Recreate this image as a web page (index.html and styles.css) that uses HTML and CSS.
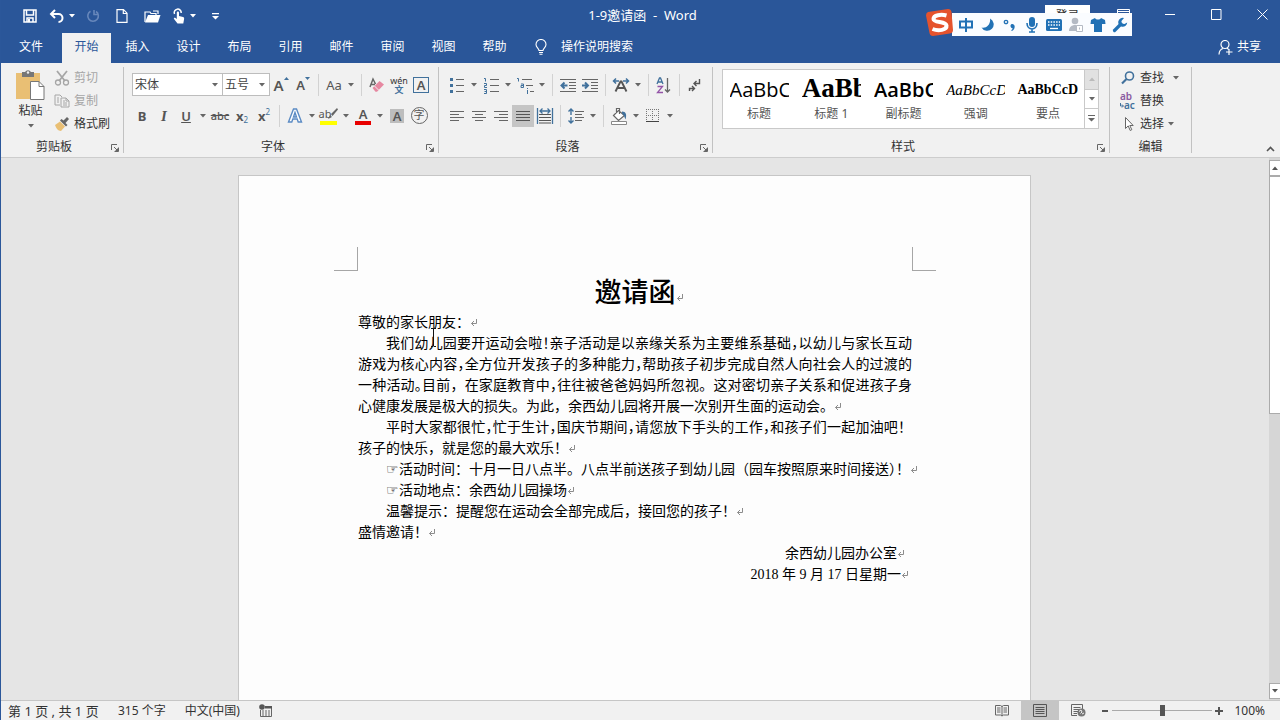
FILE: index.html
```html
<!DOCTYPE html>
<html lang="zh-CN">
<head>
<meta charset="utf-8">
<title>1-9邀请函 - Word</title>
<link rel="stylesheet" href="styles.css">
</head>
<body>
<svg class="sprite" aria-hidden="true">
  <symbol id="caret" viewBox="0 0 6 4"><path d="M0 0h6L3 3.5z" fill="currentColor"/></symbol>
  <symbol id="launch" viewBox="0 0 8 8"><path d="M.5 6V.5H6M3 3l3.500 3.500M7.500 3.500v4h-4" fill="none" stroke="currentColor"/><path d="M7 4v3H4z" fill="currentColor"/></symbol>
  <symbol id="ret" viewBox="0 0 8 8"><path d="M6.500 0v4.500H1.500M4 2 1.500 4.500 4 7" fill="none" stroke="currentColor"/></symbol>
</svg>
<div class="window">
  <header class="titlebar">
    <div class="quick">
      <button class="q" aria-label="保存"><svg width="14" height="14" viewBox="0 0 14 14"><path d="M1 1h12v12H1zM3.500 1v5h7V1M4 13V9h6v4" fill="none" stroke="currentColor" stroke-width="1.500"/><path d="M5 10h2v3H5z" fill="currentColor"/></svg></button>
      <button class="q q-split" aria-label="撤消"><svg width="16" height="14" viewBox="0 0 16 14"><path d="M2 5h7.500a4 4 0 0 1 0 8M6 1 2 5l4 4" fill="none" stroke="currentColor" stroke-width="2"/></svg><svg class="caret"><use href="#caret"/></svg></button>
      <button class="q dim" aria-label="恢复"><svg width="14" height="14" viewBox="0 0 14 14"><path d="M10 2.500A5.300 5.300 0 1 1 4.500 2.300M8 1v4.500h4.500" fill="none" stroke="currentColor" stroke-width="1.600"/></svg></button>
      <button class="q" aria-label="新建"><svg width="12" height="14" viewBox="0 0 12 14"><path d="M1 .7h6.500L11 4.200v9.100H1zM7.300 1v3.500H11" fill="none" stroke="currentColor" stroke-width="1.200"/></svg></button>
      <button class="q" aria-label="打开"><svg width="17" height="14" viewBox="0 0 17 14"><path d="M1 13V3h5l1 1.500h5V6M9 2h5v3" fill="none" stroke="currentColor" stroke-width="1.200"/><path d="M4 6h12.500L14 13.500H1z" fill="currentColor"/></svg></button>
      <button class="q q-split" aria-label="触摸/鼠标模式"><svg width="14" height="16" viewBox="0 0 14 16"><path d="M2.500 6A3.500 3.500 0 1 1 9.200 5" fill="none" stroke="currentColor" stroke-width="1.500"/><path d="M4.800 4.500c0-1.500 2.200-1.500 2.200 0V8l4 1c1 .3 1.300 1 1.100 2l-.8 4.500H5.500L2 11c-.6-1.200.8-1.700 1.500-1l1.300 1z" fill="currentColor"/></svg><svg class="caret"><use href="#caret"/></svg></button>
      <button class="q" aria-label="自定义快速访问工具栏"><svg width="7" height="7" viewBox="0 0 7 7"><path d="M0 0h7v1.200H0zM0 3h7L3.500 6.500z" fill="currentColor"/></svg></button>
    </div>
    <h1 class="caption">1-9邀请函&nbsp; -&nbsp; Word</h1>
    <div class="controls">
      <button class="login">登录</button>
      <button class="c c-opt" aria-label="功能区显示选项"><svg width="13" height="11" viewBox="0 0 13 11"><path d="M.5.500h12v10H.5zM1 2.500h11" fill="none" stroke="currentColor"/></svg></button>
      <button class="c" aria-label="最小化"><svg width="11" height="11" viewBox="0 0 11 11"><path d="M0 5.500h10" stroke="currentColor"/></svg></button>
      <button class="c" aria-label="最大化"><svg width="11" height="11" viewBox="0 0 11 11"><path d="M.5.500h9.500v10H.5z" fill="none" stroke="currentColor"/></svg></button>
      <button class="c c-close" aria-label="关闭"><svg width="11" height="11" viewBox="0 0 11 11"><path d="m.5.500 10 10m0-10-10 10" stroke="currentColor"/></svg></button>
    </div>
  </header>

  <nav class="tabs">
    <button class="tab file">文件</button>
    <button class="tab active">开始</button>
    <button class="tab">插入</button>
    <button class="tab">设计</button>
    <button class="tab">布局</button>
    <button class="tab">引用</button>
    <button class="tab">邮件</button>
    <button class="tab">审阅</button>
    <button class="tab">视图</button>
    <button class="tab">帮助</button>
    <button class="tell"><svg width="12" height="16" viewBox="0 0 12 16"><path d="M4 11.500C4 9.500 1 8.500 1 5.500a5 5 0 0 1 10 0c0 3-3 4-3 6zM4 13.500h4M4.500 15.300h3" fill="none" stroke="currentColor" stroke-width="1.100"/></svg>操作说明搜索</button>
    <button class="share"><svg width="15" height="15" viewBox="0 0 15 15"><circle cx="7" cy="4.500" r="4" fill="none" stroke="currentColor" stroke-width="1.200"/><path d="M1 14.500c.2-4 2-5.500 4-6M9 8.300l1.500 1M11 9v6M8 12h6.500" fill="none" stroke="currentColor" stroke-width="1.200"/></svg>共享</button>
  </nav>

  <div class="ime">
    <svg class="ime-logo" width="29" height="29" viewBox="0 0 29 29"><path d="M3 4 23 1q3 0 3.500 3L28 22q0 3-3 3.500L8 28q-3 0-3.500-3L1 7.500Q1 4.500 3 4z" fill="#e5532d"/><path d="M21.500 7.500C16 6 8.500 7 8.500 11s12.500 2 13 6.500-8 6-14 3.500" fill="none" stroke="#fff" stroke-width="4"/></svg>
    <div class="ime-bar">
      <svg width="16" height="16" viewBox="0 0 16 16"><path d="M2 4.500h12v6H2zM8 1v14" fill="none" stroke="currentColor" stroke-width="2"/></svg>
      <svg width="16" height="16" viewBox="0 0 16 16"><path d="M10 1.500a6.500 6.500 0 1 1-8.500 9C6 12 11 7.500 10 1.500z" fill="currentColor"/></svg>
      <svg width="16" height="16" viewBox="0 0 16 16"><circle cx="4" cy="5" r="1.700" fill="none" stroke="currentColor" stroke-width="1.300"/><path d="M8.500 8.800c0-2.400 4.200-2.400 4.200 1 0 2.200-1.500 3.700-3 4.200l-.5-1c1-.5 1.400-1.100 1.400-1.800-1.100.2-2.100-1-2.100-2.400z" fill="currentColor"/></svg>
      <svg width="16" height="16" viewBox="0 0 16 16"><rect x="5" y="0" width="6" height="10" rx="3" fill="currentColor"/><path d="M3 6c0 8 10 8 10 0M8 12v3M5 15h6" fill="none" stroke="currentColor" stroke-width="1.600"/></svg>
      <svg width="16" height="16" viewBox="0 0 16 16"><rect x="0" y="2" width="16" height="12" rx="1.500" fill="currentColor"/><path d="M2 5h12M2 8h12" stroke="#fff" stroke-width="1.500" stroke-dasharray="1.500 1.200"/><path d="M4 11.500h8" stroke="#fff" stroke-width="1.300"/></svg>
      <svg class="muted" width="16" height="16" viewBox="0 0 16 16"><circle cx="7" cy="4" r="3.300" fill="currentColor"/><path d="M1 14c0-8 12-8 12 0z" fill="currentColor"/><path d="M8.500 8.500h6v6h-6z" fill="#fff" stroke="currentColor"/><path d="M11 10.500h1v2h-1z" fill="currentColor"/></svg>
      <svg width="16" height="16" viewBox="0 0 16 16"><path d="M1 3l4-2c1 2 5 2 6 0l4 2 .5 4H12v8H4V7H.5z" fill="currentColor"/></svg>
      <svg width="16" height="16" viewBox="0 0 16 16"><path d="M2.500 13.500 9 7" stroke="currentColor" stroke-width="3.200" stroke-linecap="round"/><path d="M12 1a4.500 4.500 0 1 0 3.200 4.500L12.500 7l-3-.5V4z" fill="currentColor"/></svg>
    </div>
  </div>

  <section class="ribbon">
    <div class="group clipboard">
      <div class="body clip-body">
        <button class="paste"><svg width="29" height="32" viewBox="0 0 29 32"><path d="M0 4h24v26H0z" fill="#e9bf74"/><path d="M6 3h3a3.500 3.500 0 0 1 6 0h3v5H6z" fill="#777"/><circle cx="12" cy="3.500" r="1.200" fill="#f1f1f1"/><path d="M14.500 12.500h8.500l5 5v13H14.500z" fill="#fff" stroke="#777"/><path d="M23 12.500v5h5" fill="none" stroke="#777"/></svg><span>粘贴</span><svg class="caret"><use href="#caret"/></svg></button>
        <div class="stack">
          <button class="cmd off"><svg width="16" height="16" viewBox="0 0 16 16"><path d="M3 1l8 10M13 1 5 11" fill="none" stroke="currentColor" stroke-width="1.800"/><circle cx="4" cy="12.500" r="2.500" fill="none" stroke="currentColor" stroke-width="1.300"/><circle cx="12" cy="12.500" r="2.500" fill="none" stroke="currentColor" stroke-width="1.300"/></svg>剪切</button>
          <button class="cmd off"><svg width="16" height="16" viewBox="0 0 16 16"><path d="M6 12H1V2h5l2 2M7 5h5l3 3v6H7zM12 5v3h3M3 5h2M3 7h2M3 9h2M9 8h2M9 10h4M9 12h4" fill="none" stroke="currentColor"/></svg>复制</button>
          <button class="cmd"><svg width="16" height="16" viewBox="0 0 16 16"><path d="m1 9 5-3.500 5 5L7 15c-3 0-5-3-6-6z" fill="#e9bf74"/><path d="m6 4.500 6 6 1.500-1.500-2-2 3.500-4L13 1 9.500 4.500 7.500 3z" fill="#666"/></svg>格式刷</button>
        </div>
      </div>
      <footer class="label"><span>剪贴板</span><button class="launch" aria-label="剪贴板选项"><svg width="8" height="8"><use href="#launch"/></svg></button></footer>
    </div>

    <div class="group font">
      <div class="body rows">
        <div class="row">
          <div class="combo family"><select aria-label="字体"><option>宋体</option></select><svg class="caret"><use href="#caret"/></svg></div>
          <div class="combo size"><select aria-label="字号"><option>五号</option></select><svg class="caret"><use href="#caret"/></svg></div>
          <button class="ico glyph" aria-label="增大字号"><span class="g15">A</span><svg class="sup" width="5" height="3" viewBox="0 0 5 3"><path d="M0 3h5L2.500 0z" fill="#41719c"/></svg></button>
          <button class="ico glyph" aria-label="减小字号"><span class="g13">A</span><svg class="sup" width="5" height="3" viewBox="0 0 5 3"><path d="M0 0h5L2.500 3z" fill="#41719c"/></svg></button>
          <i class="sep"></i>
          <button class="split" aria-label="更改大小写"><span class="ico">Aa</span><svg class="caret"><use href="#caret"/></svg></button>
          <i class="sep"></i>
          <button class="ico" aria-label="清除所有格式"><svg width="16" height="16" viewBox="0 0 16 16"><path d="m1 10 3-8 2.500 5M2 7.500h4" fill="none" stroke="#666" stroke-width="1.500"/><path d="m3.500 11 7-7L15 7.500l-7 7.200H6.500z" fill="#e688a1"/><path d="m5.500 9 4 4" stroke="#f1f1f1"/></svg></button>
          <button class="ico pinyin" aria-label="拼音指南"><span>wén</span><b>文</b></button>
          <button class="ico" aria-label="字符边框"><span class="boxed">A</span></button>
        </div>
        <div class="row">
          <button class="ico"><b>B</b></button>
          <button class="ico serif"><em>I</em></button>
          <button class="split"><span class="ico under">U</span><svg class="caret"><use href="#caret"/></svg></button>
          <button class="ico strike">abc</button>
          <button class="ico script"><b>x</b><sub>2</sub></button>
          <button class="ico script"><b>x</b><sup>2</sup></button>
          <i class="sep"></i>
          <button class="split" aria-label="文本效果"><svg class="ico" viewBox="0 0 22 22"><path d="M9.500 4h3l5 13h-3.300l-1-3H8.800l-1 3H4.500zM11 7.500l-1.500 4.500h3z" fill="#fff" stroke="#5b8bc4" stroke-width="1.400"/></svg><svg class="caret"><use href="#caret"/></svg></button>
          <button class="split mark" aria-label="突出显示"><span class="ico hilite">ab<svg width="11" height="11" viewBox="0 0 11 11"><path d="M10 0 4 6l1.500 2L11 1.500zM3 7l2 2-4 2z" fill="#666"/></svg></span><svg class="caret"><use href="#caret"/></svg></button>
          <button class="split" aria-label="字体颜色"><span class="ico colour">A</span><svg class="caret"><use href="#caret"/></svg></button>
          <button class="ico" aria-label="字符底纹"><span class="shade">A</span></button>
          <button class="ico" aria-label="带圈字符"><span class="ring">字</span></button>
        </div>
      </div>
      <footer class="label"><span>字体</span><button class="launch" aria-label="字体选项"><svg width="8" height="8"><use href="#launch"/></svg></button></footer>
    </div>

    <div class="group para">
      <div class="body rows">
        <div class="row">
          <button class="split" aria-label="项目符号"><svg class="ico" viewBox="0 0 22 22"><path d="M10 5.500h8M10 11.500h8M10 17.500h8" stroke="#666"/><path d="M4 4h3v3H4zM4 10h3v3H4zM4 16h3v3H4z" fill="#41719c"/></svg><svg class="caret"><use href="#caret"/></svg></button>
          <button class="split" aria-label="编号"><svg class="ico" viewBox="0 0 22 22"><path d="M10 5.500h9M10 11.500h9M10 17.500h9" stroke="#666"/><path d="M4 4.500h1.500v3M4 9.500h2.500v2H4.500v2h2.500M4 15.500h2.500v4H4M4.500 17.500h2" fill="none" stroke="#41719c"/></svg><svg class="caret"><use href="#caret"/></svg></button>
          <button class="split" aria-label="多级列表"><svg class="ico" viewBox="0 0 22 22"><path d="M8 5.500h10M12 11.500h7M16 17.500h4" stroke="#666"/><path d="M3 4.500h1.500v3M7 10h2.500v3.500H7v-2h2.500M13.500 16v4M13.500 14v1" fill="none" stroke="#41719c"/></svg><svg class="caret"><use href="#caret"/></svg></button>
          <i class="sep"></i>
          <button class="ico" aria-label="减少缩进"><svg class="ico" viewBox="0 0 22 22"><path d="M3 5.500h16M12 8.500h7M12 11.500h7M12 14.500h7M3 17.500h16" stroke="#666"/><path d="M10.500 11.500h-6M7.500 8.500l-3 3 3 3" fill="none" stroke="#41719c" stroke-width="2"/></svg></button>
          <button class="ico" aria-label="增加缩进"><svg class="ico" viewBox="0 0 22 22"><path d="M3 5.500h16M12 8.500h7M12 11.500h7M12 14.500h7M3 17.500h16" stroke="#666"/><path d="M3 11.500h6M6 8.500l3 3-3 3" fill="none" stroke="#41719c" stroke-width="2"/></svg></button>
          <i class="sep"></i>
          <button class="split" aria-label="中文版式"><svg class="ico" viewBox="0 0 22 22"><path d="m5.500 17.500 5-10h1l5 10M7.500 14h7" fill="none" stroke="#555" stroke-width="1.900"/><path d="M9 7H4M6 4.500 3.500 7 6 9.500M13 7h5M16 4.500 18.500 7 16 9.500" fill="none" stroke="#41719c" stroke-width="1.500"/></svg><svg class="caret"><use href="#caret"/></svg></button>
          <i class="sep"></i>
          <button class="ico" aria-label="排序"><svg class="ico" viewBox="0 0 22 22"><path d="M4 10 6.500 4h1L10 10M5 8h4" fill="none" stroke="#41719c" stroke-width="1.300"/><path d="M4.500 12.500h5l-5 6H10" fill="none" stroke="#9455a8" stroke-width="1.300"/><path d="M14.500 4v14M12 15.500l2.500 2.500 2.500-2.500" fill="none" stroke="#666" stroke-width="1.300"/></svg></button>
          <i class="sep"></i>
          <button class="ico" aria-label="显示编辑标记"><svg class="ico" viewBox="0 0 22 22"><path d="M15.500 5v4.500h-5M12.500 7l-2.500 2.500 2.500 2.500M5.500 17v-2.500H10M8 12l2.500 2.500L8 17" fill="none" stroke="#555" stroke-width="1.400"/></svg></button>
        </div>
        <div class="row">
          <button class="ico" aria-label="左对齐"><svg class="ico" viewBox="0 0 22 22"><path d="M4 6.500h14M4 9.500h9M4 12.500h14M4 15.500h9" stroke="#666"/></svg></button>
          <button class="ico" aria-label="居中"><svg class="ico" viewBox="0 0 22 22"><path d="M4 6.500h14M7 9.500h8M4 12.500h14M7 15.500h8" stroke="#666"/></svg></button>
          <button class="ico" aria-label="右对齐"><svg class="ico" viewBox="0 0 22 22"><path d="M4 6.500h14M9 9.500h9M4 12.500h14M9 15.500h9" stroke="#666"/></svg></button>
          <button class="ico on" aria-label="两端对齐" aria-pressed="true"><svg class="ico" viewBox="0 0 22 22"><path d="M4 6.500h14M4 9.500h14M4 12.500h14M4 15.500h14" stroke="#555"/></svg></button>
          <button class="ico" aria-label="分散对齐"><svg class="ico" viewBox="0 0 22 22"><path d="M5 9.500h12M5 12.500h12M5 15.500h12M5 18h12" stroke="#555" stroke-width="1.200"/><path d="M3.500 3v16M18.500 3v16M6 6h10M8.500 3.500 6 6l2.500 2.500M13.500 3.500 16 6l-2.500 2.500" fill="none" stroke="#41719c" stroke-width="1.300"/></svg></button>
          <i class="sep"></i>
          <button class="split" aria-label="行距"><svg class="ico" viewBox="0 0 22 22"><path d="M10 6.500h9M10 9.500h7M10 12.500h9M10 15.500h7" stroke="#666"/><path d="M6 4v6M3.500 6.500 6 4l2.500 2.500M6 12v6M3.500 15.500 6 18l2.500-2.500" fill="none" stroke="#41719c" stroke-width="1.400"/></svg><svg class="caret"><use href="#caret"/></svg></button>
          <i class="sep"></i>
          <button class="split" aria-label="底纹"><svg class="ico" viewBox="0 0 22 22"><path d="m5.500 10.500 5-5 6 5-6 5zM8.500 8V3.500h3V9" fill="#fff" stroke="#666" stroke-width="1.200"/><path d="M14 6.500c4 0 5 3 3.500 8-1-2-1-4-3.500-6z" fill="#41719c"/><path d="M3.500 16.500h15v3h-15z" fill="#fff" stroke="#888"/></svg><svg class="caret"><use href="#caret"/></svg></button>
          <button class="split" aria-label="边框"><svg class="ico" viewBox="0 0 22 22"><path d="M4 4.500h13M4 10.500h13M4.500 4v12M10.500 4v12M16.500 4v12" stroke="#777" stroke-dasharray="1 1"/><path d="M4 16.500h13" stroke="#444"/></svg><svg class="caret"><use href="#caret"/></svg></button>
        </div>
      </div>
      <footer class="label"><span>段落</span><button class="launch" aria-label="段落选项"><svg width="8" height="8"><use href="#launch"/></svg></button></footer>
    </div>

    <div class="group styles">
      <div class="body">
        <div class="gallery">
          <button class="style"><span class="sample s-title">AaBbCcDd</span><span>标题</span></button>
          <button class="style"><span class="sample s-h1">AaBbCcDd</span><span>标题 1</span></button>
          <button class="style"><span class="sample s-sub">AaBbCcDd</span><span>副标题</span></button>
          <button class="style"><span class="sample s-em">AaBbCcDd</span><span>强调</span></button>
          <button class="style"><span class="sample s-strong">AaBbCcD</span><span>要点</span></button>
          <div class="pager">
            <button class="off" aria-label="上一行"><svg class="caret flip"><use href="#caret"/></svg></button>
            <button aria-label="下一行"><svg class="caret"><use href="#caret"/></svg></button>
            <button aria-label="其他"><svg width="7" height="7" viewBox="0 0 7 7"><path d="M0 0h7v1H0zM0 3h7L3.500 6.500z" fill="#666"/></svg></button>
          </div>
        </div>
      </div>
      <footer class="label"><span>样式</span><button class="launch" aria-label="样式选项"><svg width="8" height="8"><use href="#launch"/></svg></button></footer>
    </div>

    <div class="group edit">
      <div class="body stack">
        <button class="cmd"><svg width="16" height="16" viewBox="0 0 16 16"><circle cx="9.500" cy="6" r="4" fill="none" stroke="#41719c" stroke-width="1.600"/><path d="M6.500 9 2 13.500" stroke="#41719c" stroke-width="2.200"/></svg>查找<svg class="caret wide"><use href="#caret"/></svg></button>
        <button class="cmd"><span class="swap"><i>ab</i><b><svg width="4" height="5" viewBox="0 0 4 5"><path d="M.5 0v3H3M2 1.500 3.500 3 2 4.500" fill="none" stroke="currentColor"/></svg>ac</b></span>替换</button>
        <button class="cmd"><svg width="16" height="16" viewBox="0 0 16 16"><path d="M5.500 1.500v11l2.700-2.600 2 4.600 1.600-.8-2-4.200h3.400z" fill="#fff" stroke="#666"/></svg>选择<svg class="caret"><use href="#caret"/></svg></button>
      </div>
      <footer class="label"><span>编辑</span></footer>
    </div>
    <div class="tail"><button aria-label="折叠功能区"><svg width="9" height="6" viewBox="0 0 9 6"><path d="m1 5 3.500-3.500L8 5" fill="none" stroke="#555" stroke-width="1.600"/></svg></button></div>
  </section>

  <div class="workspace">
    <main class="canvas">
      <article class="page">
        <div class="marks"><i></i><i></i></div>
        <h2>邀请函<svg class="ret"><use href="#ret"/></svg></h2>
        <p>尊敬的家长朋友：<svg class="ret"><use href="#ret"/></svg></p>
        <p class="first full">我们幼儿园要开运动会啦<s>！</s>亲子活动是以亲缘关系为主要维系基础<s>，</s>以幼儿与家长互动</p>
        <p class="full">游戏为核心内容<s>，</s>全方位开发孩子的多种能力<s>，</s>帮助孩子初步完成自然人向社会人的过渡的</p>
        <p class="full">一种活动<s>。</s>目前，在家庭教育中<s>，</s>往往被爸爸妈妈所忽视。这对密切亲子关系和促进孩子身</p>
        <p>心健康发展是极大的损失。为此，余西幼儿园将开展一次别开生面的运动会。<svg class="ret"><use href="#ret"/></svg></p>
        <p class="first full">平时大家都很忙<s>，</s>忙于生计<s>，</s>国庆节期间<s>，</s>请您放下手头的工作<s>，</s>和孩子们一起加油吧！</p>
        <p>孩子的快乐，就是您的最大欢乐！<svg class="ret"><use href="#ret"/></svg></p>
        <p class="first"><span class="hand">☞</span>活动时间：十月一日八点半。八点半前送孩子到幼儿园（园车按照原来时间接送<s>）</s>！<svg class="ret"><use href="#ret"/></svg></p>
        <p class="first"><span class="hand">☞</span>活动地点：余西幼儿园操场<svg class="ret"><use href="#ret"/></svg></p>
        <p class="first">温馨提示：提醒您在运动会全部完成后，接回您的孩子！<svg class="ret"><use href="#ret"/></svg></p>
        <p>盛情邀请！<svg class="ret"><use href="#ret"/></svg></p>
        <p class="sign office">余西幼儿园办公室<svg class="ret"><use href="#ret"/></svg></p>
        <p class="sign">2018 年 9 月 17 日星期一<svg class="ret"><use href="#ret"/></svg></p>
        <svg class="ibeam" width="7" height="19" viewBox="0 0 7 19"><path d="M1 .5h2l.5.500.5-.5h2M3.500 1v17M1 18.500h2l.5-.5.500.5h2" fill="none" stroke="#111"/></svg>
      </article>
    </main>
    <div class="scroll">
      <button aria-label="向上滚动"><svg class="caret flip"><use href="#caret"/></svg></button>
      <div class="track"><div class="thumb"></div></div>
      <button aria-label="向下滚动"><svg class="caret"><use href="#caret"/></svg></button>
    </div>
  </div>

  <footer class="status">
    <span class="pages">第 1 页 , 共 1 页</span>
    <span>315 个字</span>
    <span>中文(中国)</span>
    <button aria-label="宏录制"><svg width="13" height="13" viewBox="0 0 13 13"><path d="M1.500 6v6.500h11v-9H7" fill="none" stroke="#666"/><circle cx="3" cy="3" r="2.800" fill="#555"/><path d="M6 2h7v2.500H6z" fill="#555"/><path d="M3 7h8M3 9h8M3 11h8" stroke="#666" stroke-dasharray="2 1"/></svg></button>
    <div class="views">
      <button aria-label="阅读视图"><svg width="14" height="13" viewBox="0 0 14 13"><path d="M.5 1.500h5L7 2.500l1.500-1h5v9.500h-5L7 12l-1.500-1h-5zM7 2v10M2 4h3.500M2 6h3.500M2 8h3.500M8.500 4H12M8.500 6H12M8.500 8H12" fill="none" stroke="#666"/></svg></button>
      <button class="on" aria-label="页面视图" aria-pressed="true"><svg width="14" height="13" viewBox="0 0 14 13"><path d="M.5.500h13v12H.5zM2.500 3.500h9M2.500 5.500h9M2.500 7.500h9M2.500 9.500h9" fill="none" stroke="#555"/></svg></button>
      <button aria-label="Web 版式视图"><svg width="15" height="13" viewBox="0 0 15 13"><path d="M6 11.500H.5v-11h11V5M2.500 3.500h7M2.500 5.500h7M2.500 7.500H7M2.500 9.500H6" fill="none" stroke="#666"/><circle cx="10.500" cy="8.500" r="4" fill="#777"/><path d="M8 7.500 10 6l1 2-1.500 1.500M11 10l2-1" stroke="#f1f1f1" fill="none"/></svg></button>
    </div>
    <div class="zoom">
      <button aria-label="缩小"><svg width="8" height="8" viewBox="0 0 8 8"><path d="M1 4h6" stroke="#555" stroke-width="2"/></svg></button>
      <input type="range" min="0" max="100" value="50" aria-label="显示比例">
      <button aria-label="放大"><svg width="8" height="8" viewBox="0 0 8 8"><path d="M0 4h8M4 0v8" stroke="#555" stroke-width="2"/></svg></button>
      <button class="percent">100%</button>
    </div>
  </footer>
</div>
</body>
</html>
```
FILE: styles.css
```css
* { box-sizing: border-box; }
body {
  margin: 0;
  font: 12px/16px "Noto Sans", "Noto Sans CJK SC", sans-serif;
  color: #333;
}
button {
  display: flex;
  align-items: center;
  justify-content: center;
  margin: 0;
  padding: 0;
  border: 0;
  background: none;
  color: inherit;
  font: inherit;
  white-space: nowrap;
}
svg { display: block; flex: none; }
.sprite { position: absolute; width: 0; height: 0; }
.window {
  position: relative;
  display: flex;
  flex-direction: column;
  height: 100vh;
  overflow: hidden;
  border-left: 1px solid #2b579a;
  background: #e5e5e5;
}
.caret { width: 6px; height: 4px; color: #666; }
.flip { transform: rotate(180deg); }

/* Title bar */
.titlebar {
  display: grid;
  grid-template-columns: 1fr auto 1fr;
  height: 32px;
  flex: none;
  background: #2a5699;
  color: #fff;
}
.quick { display: flex; align-items: center; padding-left: 14px; }
.q { width: 30px; height: 30px; }
.q-split { width: 34px; gap: 4px; }
.q .caret { color: #fff; }
.q-split + .q { width: 28px; }
.dim { color: #6787bb; }
.caption { margin: 0 0 0 4px; font-size: 13px; font-weight: 400; line-height: 30px; }
.controls { display: flex; justify-content: flex-end; align-items: flex-start; }
.c { width: 46px; height: 28px; }
.c-opt { width: 57px; padding-left: 10px; }
.c-close { width: 41px; padding-left: 5px; }
.login { width: 45px; height: 21px; margin-top: 5px; background: #fff; color: #333; }

/* Ribbon tabs */
.tabs { display: flex; height: 31px; flex: none; padding: 1px 19px 0 0; background: #2a5699; color: #fff; }
.tab { width: 49px; margin: 0 1px; padding-bottom: 3px; }
.file { width: 58px; }
.active { background: #f1f1f1; color: #2b579a; }
.tell { gap: 14px; margin-left: 15px; padding-bottom: 2px; }
.share { gap: 4px; margin-left: auto; padding-bottom: 2px; }

/* Input-method bar floating over the window */
.ime { position: absolute; right: 148px; top: 8px; display: flex; align-items: flex-start; color: #2171b5; }
.ime-logo { position: relative; z-index: 1; margin-right: -2px; }
.ime-bar { display: flex; align-items: center; gap: 6px; height: 23px; margin-top: 5px; padding: 0 4px 0 6px; background: #fafcff; }
.muted { color: #b4bac4; }

/* Ribbon */
.ribbon { display: flex; height: 95px; flex: none; border-bottom: 1px solid #cdcdcd; background: #f1f1f1; color: #333; }
.group { display: flex; flex-direction: column; margin: 4px 0; border-right: 1px solid #c2c2c2; }
.body { flex: 1; }
.label { display: flex; height: 16px; margin-bottom: -1px; text-align: center; }
.label span { flex: 1; padding-top: 1px; }
.launch { width: 16px; color: #666; padding-top: 4px; }
.clipboard { width: 123px; }
.font { width: 315px; }
.para { width: 274px; }
.styles { flex: 1; }
.edit { width: 82px; }
.tail { display: flex; align-items: flex-end; justify-content: flex-end; width: 88px; padding: 5px; }

.clip-body { display: flex; }
.paste { flex-direction: column; justify-content: flex-start; width: 53px; padding: 2px 0 0 6px; gap: 2px; }
.paste .caret { margin-top: 3px; }
.stack { display: flex; flex-direction: column; margin-top: -1px; }
.cmd { height: 23px; gap: 4px; justify-content: flex-start; }
.cmd .wide { margin-left: 5px; }
.off { color: #a6a6a6; }
.edit .stack { padding-left: 10px; }
.swap { display: flex; flex-direction: column; width: 16px; font-size: 10px; line-height: 9px; color: #41719c; }
.swap i { font-style: normal; font-weight: 600; text-align: left; color: #8a5aa0; }
.swap b { display: flex; align-items: center; font-weight: 600; }

.rows { display: flex; flex-direction: column; padding: 2px 0 0 7px; }
.row { display: flex; align-items: center; height: 31px; }
.ico { display: flex; align-items: center; justify-content: center; width: 22px; height: 22px; font-size: 13px; color: #555; }
.split { width: 34px; justify-content: flex-start; gap: 3px; }
.sep { width: 1px; height: 22px; margin: 0 4px; background: #d2d2d2; }
.on { background: #c5c5c5; }
.combo { display: grid; align-items: center; height: 23px; border: 1px solid #bdbdbd; background: #fff; }
.combo select, .combo .caret { grid-area: 1 / 1; }
.combo select { width: 100%; height: 21px; padding: 0 2px; border: 0; appearance: none; background: none; color: #444; font: inherit; }
.combo .caret { justify-self: end; margin-right: 4px; pointer-events: none; }
.family { width: 91px; margin-left: 1px; }
.size { width: 48px; margin-left: -1px; }
.glyph { gap: 0; font-weight: 600; }
.glyph .sup { margin-bottom: 12px; }
.g15 { font-size: 15px; }
.g13 { font-size: 13px; }
.pinyin { flex-direction: column; font-size: 9px; line-height: 9px; color: #333; }
.pinyin b { color: #41719c; }
.boxed { width: 16px; height: 16px; border: 1px solid #41719c; font-weight: 600; line-height: 14px; }
.serif { font-family: "Liberation Serif", serif; font-size: 15px; font-weight: 700; }
.under { font-weight: 600; text-decoration: underline; }
.strike { font-size: 11px; text-decoration: line-through; font-weight: 500; }
.script sub, .script sup { font-size: 8px; line-height: 8px; color: #41719c; }
.script sub { margin-top: 8px; }
.script sup { margin-bottom: 8px; }
.hilite { border-bottom: 4px solid #ff0; height: 18px; width: 17px; margin: 0 3px 0 2px; font-size: 11px; line-height: 12px; }
.hilite svg { margin-left: -4px; }
.colour { width: 16px; height: 18px; margin: 0 3px; border-bottom: 4px solid #e80000; font-weight: 600; }
.shade { width: 14px; height: 14px; background: #bdbdbd; font-weight: 600; line-height: 14px; }
.ring { width: 17px; height: 17px; border: 1px solid #666; border-radius: 50%; font-size: 11px; line-height: 14px; }

.gallery { display: flex; height: 60px; margin: 2px 10px 0 9px; border: 1px solid #c9c9c9; background: #fff; }
.style { flex: 1; flex-direction: column; justify-content: flex-start; color: #555; }
.sample { display: block; width: 59px; height: 36px; overflow: hidden; text-align: left; color: #000; line-height: 40px; }
.s-title { font-family: "Open Sans", sans-serif; font-size: 20px; }
.s-h1 { font-family: "Liberation Serif", serif; font-size: 27px; font-weight: 700; line-height: 36px; }
.s-sub { font-family: "Open Sans", sans-serif; font-size: 20px; font-weight: 600; }
.s-em { font-family: "Liberation Serif", serif; font-size: 15px; font-style: italic; }
.s-strong { width: 61px; font-family: "Liberation Serif", serif; font-size: 14px; font-weight: 700; }
.pager { display: flex; flex-direction: column; width: 14px; border-left: 1px solid #c9c9c9; }
.pager button { flex: 1; border-top: 1px solid #c9c9c9; }
.pager .off { border-top: 0; background: #e1e1e1; }
.pager .off .caret { color: #bbb; }

/* Document */
.workspace { display: flex; flex: 1; min-height: 0; }
.canvas { flex: 1; overflow: hidden; padding: 17px 1px 0 0; }
.page {
  position: relative;
  width: 793px;
  min-height: 1122px;
  margin: 0 auto;
  padding: 71px 118px 0 119px;
  border: 1px solid #c6c6c6;
  background: #fdfdfd;
  color: #000;
  font: 14px/21px "Liberation Serif", "Noto Sans CJK SC", sans-serif;
}
.marks { display: flex; justify-content: space-between; height: 24px; margin: 0 -24px; }
.marks i { width: 24px; border: solid #a6a6a6; border-width: 0 1px 1px 0; }
.marks i + i { border-width: 0 0 1px 1px; }
.page h2 { margin: 0; padding: 3px 0 0 8px; font-size: 27px; font-weight: 500; line-height: 38px; text-align: center; }
.page p { margin: 0; height: 21px; white-space: nowrap; }
.page .first { padding-left: 28px; }
.page .full { text-align: justify; text-align-last: justify; white-space: normal; }
.page s { text-decoration: none; font-feature-settings: "halt"; }
.page .sign { padding-right: 3px; text-align: right; }
.page .office { padding-right: 7px; }
.ret { display: inline-block; width: 8px; height: 8px; color: #8c8c8c; }
.hand { display: inline-block; width: 13px; font-family: "DejaVu Sans", sans-serif; font-weight: 700; }
.ibeam { position: absolute; left: 191px; top: 152px; }

.scroll { display: flex; flex-direction: column; width: 11px; padding: 2px 0 1px; background: #d6d6d6; }
.scroll button { height: 16px; border: 1px solid #ababab; border-right: 0; background: #fff; }
.scroll .caret { width: 8px; color: #555; }
.track { flex: 1; }
.thumb { height: 47%; border: 1px solid #ababab; border-right: 0; background: #fff; }

/* Status bar */
.status { display: flex; align-items: center; gap: 19px; height: 20px; flex: none; padding: 0 15px 0 7px; border-top: 1px solid #c6c6c6; background: #f1f1f1; }
.pages { width: 91px; font-size: 13px; white-space: nowrap; }
.views { display: flex; align-self: stretch; margin-left: auto; }
.views button { width: 38px; }
.zoom { display: flex; align-items: center; gap: 3px; margin-left: -15px; }
.zoom input { width: 100px; height: 12px; margin: 0; appearance: none; background: linear-gradient(#aaa, #aaa) center / 100% 1px no-repeat; }
.zoom input::-webkit-slider-thumb { appearance: none; width: 5px; height: 11px; background: #555; }
.percent { margin-left: 8px; }
```
